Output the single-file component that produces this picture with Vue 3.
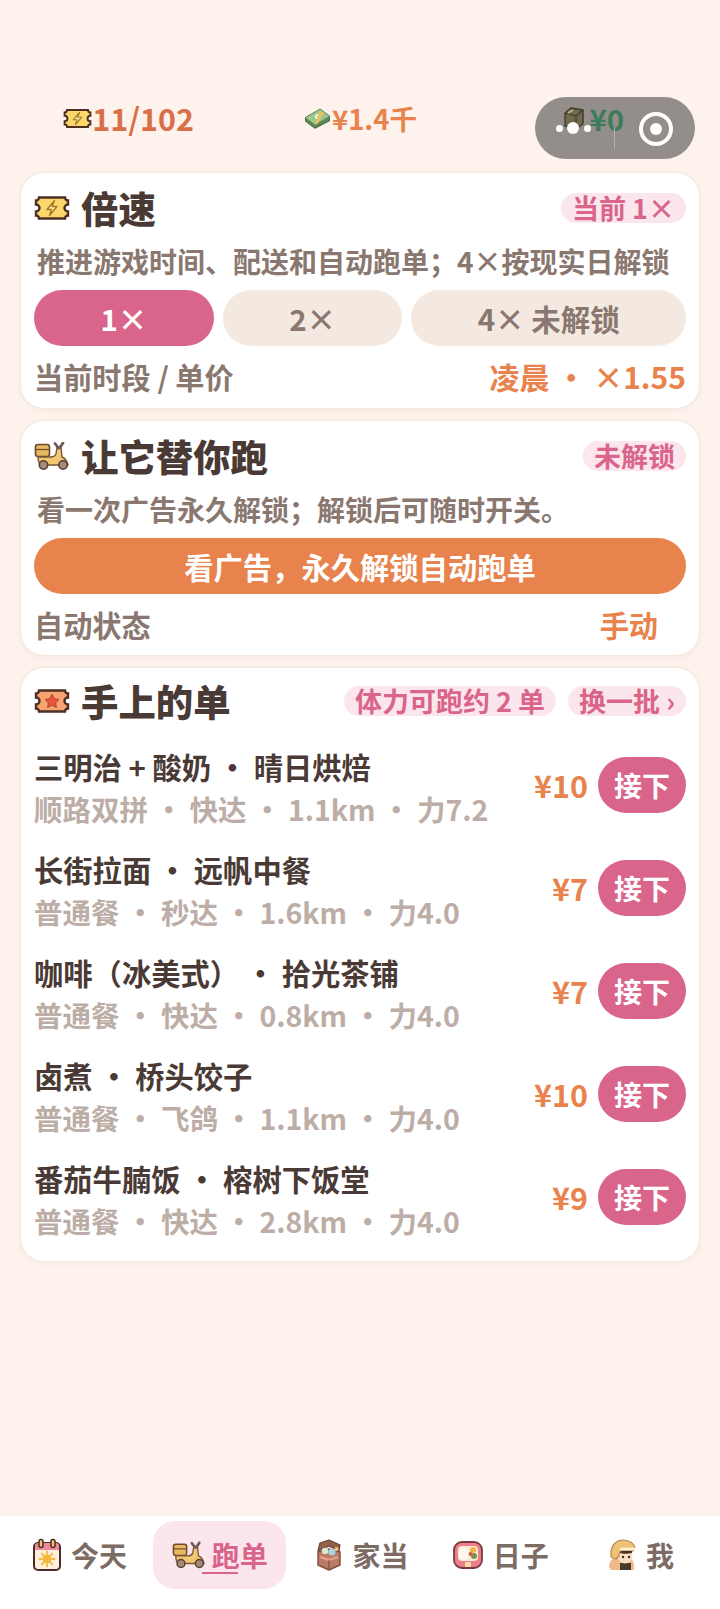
<script setup>
const orders = [
  { name: '三明治 + 酸奶 · 晴日烘焙', meta: '顺路双拼 · 快达 · 1.1km · 力7.2', price: '¥10' },
  { name: '长街拉面 · 远帆中餐', meta: '普通餐 · 秒达 · 1.6km · 力4.0', price: '¥7' },
  { name: '咖啡\uFF08冰美式\uFF09 · 拾光茶铺', meta: '普通餐 · 快达 · 0.8km · 力4.0', price: '¥7' },
  { name: '卤煮 · 桥头饺子', meta: '普通餐 · 飞鸽 · 1.1km · 力4.0', price: '¥10' },
  { name: '番茄牛腩饭 · 榕树下饭堂', meta: '普通餐 · 快达 · 2.8km · 力4.0', price: '¥9' },
]

const tabs = [
  { label: '今天', icon: 'i-calendar', w: 30 },
  { label: '跑单', icon: 'i-scooter', w: 34, active: true },
  { label: '家当', icon: 'i-chest', w: 28 },
  { label: '日子', icon: 'i-bento', w: 32 },
  { label: '我', icon: 'i-rider', w: 30 },
]
</script>

<template>
  <div class="page">
    <svg class="defs" width="0" height="0" aria-hidden="true">
      <symbol id="i-ticket" viewBox="0 0 36 26">
        <path d="M5 2.500h26a3 3 0 0 0 3 3v4a3.500 3.500 0 0 0 0 7v4a3 3 0 0 0-3 3H5a3 3 0 0 0-3-3v-4a3.500 3.500 0 0 0 0-7v-4a3 3 0 0 0 3-3z" fill="#fcd76b" stroke="#4a2f22" stroke-width="2.400"/>
        <path d="M20.500 5.500l-7.500 9h4.500l-2 6 7.500-9H18z" fill="#fdeaa6" stroke="#a07a28" stroke-width="1.400" stroke-linejoin="round"/>
      </symbol>
      <symbol id="i-ticket-red" viewBox="0 0 36 26">
        <path d="M5 2.500h26a3 3 0 0 0 3 3v4a3.500 3.500 0 0 0 0 7v4a3 3 0 0 0-3 3H5a3 3 0 0 0-3-3v-4a3.500 3.500 0 0 0 0-7v-4a3 3 0 0 0 3-3z" fill="#f6a36f" stroke="#4a2f22" stroke-width="2.400"/>
        <path d="M18 6.500l2.300 4.300 4.700.7-3.400 3.300.8 4.700-4.400-2.200-4.400 2.200.8-4.700-3.400-3.300 4.700-.7z" fill="#e9553f" stroke="#b5402c" stroke-width="1"/>
      </symbol>
      <symbol id="i-scooter" viewBox="0 0 36 28">
        <rect x="1.500" y="2.500" width="14" height="12" rx="2.500" fill="#e9b860" stroke="#6b4a30" stroke-width="1.600"/>
        <path d="M2 7.500h13" stroke="#6b4a30" stroke-width="1.200"/>
        <path d="M4 15h13c3 0 4-1 5-3l1-7h4l1 10c3 1 5 4 6 8H9c-3 0-5-3-5-8z" fill="#f2c873" stroke="#7a5632" stroke-width="1.400" stroke-linejoin="round"/>
        <path d="M21 1.500l3.500 4.500M29 1l-3.500 5" stroke="#6b5a55" stroke-width="2.800" stroke-linecap="round"/>
        <circle cx="9.500" cy="23" r="4.200" fill="#a58a7a" stroke="#5a3f34" stroke-width="1.600"/>
        <circle cx="29" cy="23" r="4.200" fill="#a58a7a" stroke="#5a3f34" stroke-width="1.600"/>
      </symbol>
      <symbol id="i-money" viewBox="0 0 30 24">
        <path d="M1.500 11L18 1.500l10.500 8v5L12 23l-10.500-8z" fill="#5f8a58" stroke="#4a6b44" stroke-width="1.400" stroke-linejoin="round"/>
        <path d="M1.500 11L12 18.500l16.500-9L18 1.500z" fill="#9cc78d"/>
        <circle cx="15" cy="10" r="3.200" fill="#e4f1dc"/>
        <path d="M17.500 3.500l-6 15 3 0 8-13z" fill="#e9c268"/>
      </symbol>
      <symbol id="i-box" viewBox="0 0 24 24">
        <path d="M3 7l6-5 12 2v14l-7 5-11-3z" fill="#6f6a4e" stroke="#3f3b2e" stroke-width="1.400" stroke-linejoin="round"/>
        <path d="M3 7l11 3 7-6M14 10v12" stroke="#3f3b2e" stroke-width="1.200" fill="none"/>
        <path d="M6 7l5-3" stroke="#b8b08a" stroke-width="2"/>
      </symbol>
      <symbol id="i-calendar" viewBox="0 0 30 34">
        <rect x="2" y="5" width="26" height="27" rx="4" fill="#fdf0dc" stroke="#4a2c2a" stroke-width="2"/>
        <path d="M3 12V8a3 3 0 0 1 3-3h18a3 3 0 0 1 3 3v4z" fill="#ee8a9c"/>
        <rect x="7" y="1.500" width="4" height="8" rx="2" fill="#f3c46a" stroke="#4a2c2a" stroke-width="1.500"/>
        <rect x="19" y="1.500" width="4" height="8" rx="2" fill="#f3c46a" stroke="#4a2c2a" stroke-width="1.500"/>
        <circle cx="15" cy="21" r="4.500" fill="#f5b73d"/>
        <path d="M15 13.500v2.500M15 26v2.500M7.500 21H10M20 21h2.500M9.700 15.700l1.800 1.800M18.500 24.500l1.800 1.800M9.700 26.300l1.800-1.800M18.500 17.500l1.800-1.800" stroke="#f5b73d" stroke-width="1.800" stroke-linecap="round"/>
      </symbol>
      <symbol id="i-chest" viewBox="0 0 28 32">
        <path d="M3 13l11-3 11 3v13l-11 5-11-5z" fill="#bb7a66" stroke="#86523f" stroke-width="1.500" stroke-linejoin="round"/>
        <path d="M3 12l2-8 9-3 11 5-1 6-10-5z" fill="#93604c" stroke="#6c4034" stroke-width="1.200" stroke-linejoin="round"/>
        <circle cx="10" cy="12" r="3.200" fill="#dbe8cc"/>
        <circle cx="17" cy="13" r="3.600" fill="#a8d3e0"/>
        <circle cx="21.500" cy="10" r="2" fill="#f0c672"/>
        <path d="M5 18l9 3 9-3" stroke="#e0a08c" stroke-width="2.400" fill="none"/>
        <path d="M14 21v10" stroke="#86523f" stroke-width="1.200"/>
      </symbol>
      <symbol id="i-bento" viewBox="0 0 32 30">
        <rect x="2" y="2" width="28" height="26" rx="8" fill="#ec7f8c" stroke="#7a3a40" stroke-width="1.800"/>
        <rect x="6" y="6" width="20" height="15" rx="4" fill="#fbe9dc"/>
        <ellipse cx="12" cy="14" rx="5" ry="6" fill="#fff8f0"/>
        <circle cx="21" cy="10" r="3" fill="#eeb43f"/>
        <circle cx="22" cy="16" r="3" fill="#6f9a4d"/>
        <circle cx="18.500" cy="14" r="2" fill="#d9553f"/>
        <rect x="13" y="22" width="6" height="5" rx="1" fill="#f8d9a8"/>
      </symbol>
      <symbol id="i-rider" viewBox="0 0 30 34">
        <path d="M2 29c0-5 3-9 7-9h12c3 0 6 3 6 8v4H4z" fill="#f0b98a"/>
        <path d="M13 25h11v7H13z" fill="#4a3a2a"/>
        <circle cx="18" cy="18" r="7.500" fill="#fbdcc0"/>
        <path d="M4 18C3 8 9 2 16 2s12 4 12 9l-2 2H15c-2 0-3 2-3 5l-3 3c-3-1-5-1-5-3z" fill="#eec377" stroke="#b58a4c" stroke-width="1.200"/>
        <path d="M14 11h14" stroke="#fff4dc" stroke-width="2.500" stroke-linecap="round"/>
        <path d="M13 15c3 1 8 1 12 0v-2H14z" fill="#4a2f22"/>
        <circle cx="16" cy="19" r="1.200" fill="#3a2a22"/>
        <circle cx="22" cy="19" r="1.200" fill="#3a2a22"/>
      </symbol>
    </svg>

    <div class="capsule"></div>

    <header class="stats">
      <div class="stat stat-energy">
        <svg class="stat-icon"><use href="#i-ticket" /></svg>11/102
      </div>
      <div class="stat stat-cash">
        <svg class="stat-icon"><use href="#i-money" /></svg>¥1.4千
      </div>
      <div class="stat stat-bank">
        <svg class="stat-icon box"><use href="#i-box" /></svg>¥0
      </div>
    </header>

    <div class="capsule-controls">
      <span class="dot"></span><span class="dot big"></span><span class="dot"></span>
      <span class="capsule-line"></span>
      <span class="capsule-ring"></span>
    </div>

    <main class="content">
      <section class="card">
        <div class="card-head">
          <svg class="title-icon"><use href="#i-ticket" /></svg>
          <h2>倍速</h2>
          <span class="pill">当前 1×</span>
        </div>
        <p class="desc">推进游戏时间、配送和自动跑单&#xFF1B;4×按现实日解锁</p>
        <div class="speed-row">
          <button class="speed on">1×</button>
          <button class="speed">2×</button>
          <button class="speed wide">4× 未解锁</button>
        </div>
        <div class="info-row">
          <span>当前时段 / 单价</span>
          <span class="info-val">凌晨 · ×1.55</span>
        </div>
      </section>

      <section class="card auto-card">
        <div class="card-head">
          <svg class="title-icon"><use href="#i-scooter" /></svg>
          <h2>让它替你跑</h2>
          <span class="pill">未解锁</span>
        </div>
        <p class="desc">看一次广告永久解锁&#xFF1B;解锁后可随时开关。</p>
        <button class="unlock">看广告&#xFF0C;永久解锁自动跑单</button>
        <div class="info-row">
          <span>自动状态</span>
          <span class="info-val auto">手动</span>
        </div>
      </section>

      <section class="card orders">
        <div class="card-head">
          <svg class="title-icon"><use href="#i-ticket-red" /></svg>
          <h2>手上的单</h2>
          <span class="pill">体力可跑约 2 单</span>
          <span class="pill">换一批 ›</span>
        </div>
        <div v-for="o in orders" :key="o.name" class="order">
          <div class="order-text">
            <div class="order-name">{{ o.name }}</div>
            <div class="order-meta">{{ o.meta }}</div>
          </div>
          <span class="order-price">{{ o.price }}</span>
          <button class="take">接下</button>
        </div>
      </section>
    </main>

    <nav class="tabbar">
      <div v-for="t in tabs" :key="t.label" class="tab" :class="{ active: t.active }">
        <svg class="tab-icon" :style="{ width: t.w + 'px' }"><use :href="'#' + t.icon" /></svg>
        <span>{{ t.label }}</span>
      </div>
    </nav>
  </div>
</template>

<style>
html, body {
  background: #fdf3ec;
}
</style>

<style scoped>
.page {
  position: relative;
  height: 1609px;
  display: flex;
  flex-direction: column;
  background: #fdf3ec;
  font-family: "Noto Sans CJK SC", sans-serif;
  font-weight: 700;
  color: #4a3a35;
}

.defs {
  position: absolute;
}

.capsule {
  position: absolute;
  left: 535px;
  top: 97px;
  width: 160px;
  height: 62px;
  border-radius: 31px;
  background: #938e8a;
}

.capsule-controls {
  position: absolute;
  left: 535px;
  top: 97px;
  width: 160px;
  height: 62px;
}

.dot {
  position: absolute;
  top: 28px;
  left: 21px;
  width: 7px;
  height: 7px;
  border-radius: 50%;
  background: #fff;
}

.dot.big {
  top: 25px;
  left: 32px;
  width: 12px;
  height: 12px;
}

.dot:nth-child(3) {
  left: 49px;
}

.capsule-line {
  position: absolute;
  left: 79px;
  top: 30px;
  width: 1px;
  height: 22px;
  background: #b5b1ad;
}

.capsule-ring {
  position: absolute;
  left: 104px;
  top: 15px;
  width: 34px;
  height: 34px;
  box-sizing: border-box;
  border: 4px solid #fff;
  border-radius: 50%;
}

.capsule-ring::after {
  content: "";
  position: absolute;
  left: 7px;
  top: 7px;
  width: 12px;
  height: 12px;
  border-radius: 50%;
  background: #fff;
}

.stats {
  position: relative;
  display: grid;
  grid-template-columns: repeat(3, 1fr);
  padding: 97px 10px 0;
  height: 172px;
  box-sizing: border-box;
}

.stat {
  display: flex;
  align-items: center;
  justify-content: center;
  height: 42px;
  font-size: 27.5px;
  color: #e8834d;
}

.stat-energy {
  font-size: 30.5px;
  color: #d96f48;
  padding-left: 4px;
}

.stat-bank {
  font-size: 29.5px;
  color: #3e7b5c;
}

.stat-cash {
  padding-bottom: 2px;
}

.stat-icon {
  width: 29px;
  height: 21px;
  flex: none;
}

.stat-icon.box {
  width: 24px;
  height: 24px;
  margin-right: 3px;
}

.content {
  flex: 1;
  padding: 0 20px;
  display: flex;
  flex-direction: column;
  gap: 11px;
}

.card {
  box-sizing: border-box;
  height: 237px;
  padding: 10px 13px 0;
  background: #fff;
  border: 1px solid #f5e8dc;
  border-radius: 24px;
  box-shadow: 0 0 0 1px #f9eee5, 0 2px 4px rgba(180, 140, 110, 0.08);
}

.card.auto-card {
  height: 236px;
}

.card.orders {
  height: 595px;
  padding-top: 8px;
}

.card-head {
  display: flex;
  align-items: center;
  height: 50px;
  gap: 12px;
}

.card-head h2 {
  margin: 0 auto 0 -1px;
  font-size: 37.4px;
  line-height: 50px;
  font-weight: 900;
  color: #4a3a35;
}

.title-icon {
  width: 36px;
  height: 28px;
  flex: none;
}

.pill {
  padding: 0 11px;
  height: 30px;
  line-height: 29px;
  border-radius: 15px;
  background: #fce6ee;
  color: #d9658a;
  font-size: 27px;
  white-space: nowrap;
}

.desc {
  margin: 7px 0 0 3px;
  font-size: 28px;
  line-height: 42px;
  color: #8a7870;
  white-space: nowrap;
}

.speed-row {
  display: flex;
  gap: 9px;
  margin-top: 8px;
}

button {
  font: inherit;
  border: none;
  padding: 0;
  cursor: pointer;
}

.speed {
  flex: 180 1 0;
  height: 56px;
  border-radius: 28px;
  background: #f3e9e0;
  color: #8a7870;
  font-size: 29.5px;
}

.speed.wide {
  flex-grow: 275;
}

.speed.on {
  background: #d9658a;
  color: #fff;
}

.info-row {
  display: flex;
  justify-content: space-between;
  align-items: center;
  height: 42px;
  margin-top: 9px;
  font-size: 29.2px;
  color: #8a7870;
}

.info-val {
  font-size: 30px;
  color: #e8834d;
}

.info-val.auto {
  padding-right: 28px;
  font-size: 29.2px;
}

.unlock {
  display: block;
  width: 100%;
  height: 56px;
  margin-top: 8px;
  border-radius: 28px;
  background: #e8834d;
  color: #fff;
  font-size: 29.3px;
}

.orders .card-head {
  margin-bottom: 7px;
}

.order {
  display: flex;
  align-items: center;
  height: 103px;
}

.order-text {
  flex: 1;
  min-width: 0;
  padding-top: 6px;
}

.order-name {
  font-size: 29.3px;
  line-height: 41px;
  color: #4a3a35;
  white-space: nowrap;
}

.order-meta {
  font-size: 28.5px;
  line-height: 43px;
  color: #bcaea6;
  white-space: nowrap;
}

.order-price {
  margin-right: 10px;
  font-size: 30.5px;
  color: #e8834d;
}

.take {
  width: 88px;
  height: 56px;
  border-radius: 28px;
  background: #d9658a;
  color: #fff;
  font-size: 28px;
  flex: none;
}

.tabbar {
  box-sizing: border-box;
  height: 93px;
  padding: 5px 13px 20px;
  display: grid;
  grid-template-columns: repeat(5, 1fr);
  gap: 7px;
  background: #fff;
}

.tab {
  position: relative;
  display: flex;
  align-items: center;
  justify-content: center;
  gap: 9px;
  border-radius: 22px;
  font-size: 28px;
  color: #7d6c65;
}

.tab:nth-child(3) {
  padding-left: 4px;
}

.tab-icon {
  height: 34px;
  flex: none;
}

.tab.active {
  gap: 6px;
  background: #fce6ee;
  color: #d9658a;
}

.tab.active::after {
  content: "";
  position: absolute;
  left: 49px;
  bottom: 15px;
  width: 36px;
  height: 2px;
  background: #d9658a;
}
</style>
